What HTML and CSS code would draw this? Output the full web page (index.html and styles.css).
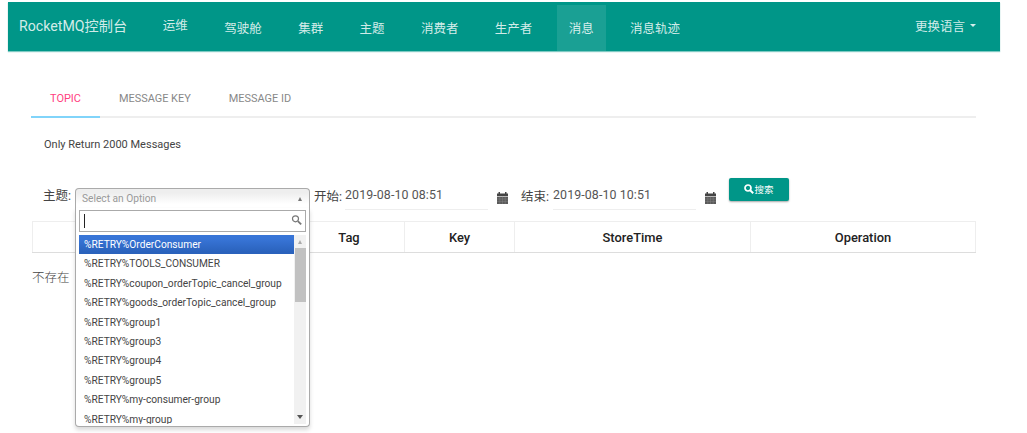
FILE: index.html
```
<!DOCTYPE html>
<html lang="zh">
<head>
    <meta charset="UTF-8">
    <meta name="viewport" content="width=device-width, initial-scale=1.0">
    <title>RocketMQ控制台</title>
    <link rel="stylesheet" href="styles.css">
</head>

<body>
    <!-- 顶部导航 -->
    <nav class="navbar">
        <a class="brand" href="#">RocketMQ控制台</a>
        <ul class="nav">
            <li class="ops"><a href="#">运维</a></li>
            <li><a href="#">驾驶舱</a></li>
            <li><a href="#">集群</a></li>
            <li><a href="#">主题</a></li>
            <li><a href="#">消费者</a></li>
            <li><a href="#">生产者</a></li>
            <li class="active"><a href="#">消息</a></li>
            <li><a href="#">消息轨迹</a></li>
        </ul>
        <a class="language" href="#">更换语言<span class="caret"></span></a>
    </nav>

    <div class="container">
        <!-- 查询方式 -->
        <div class="tabs">
            <a class="tab selected" href="#">Topic</a>
            <a class="tab" href="#">Message Key</a>
            <a class="tab" href="#">Message ID</a>
        </div>

        <h5 class="tip">Only Return 2000 Messages</h5>

        <!-- 查询条件 -->
        <form class="search-form">
            <label class="topic-label">主题:</label>
            <div class="chosen">
                <div class="chosen-single">
                    <span>Select an Option</span>
                    <i class="arrow-up"></i>
                </div>
                <div class="chosen-drop">
                    <div class="chosen-search">
                        <span class="cursor"></span>
                        <svg width="11" height="11" viewBox="0 0 11 11">
                            <circle cx="4.5" cy="3.8" r="3" fill="none" stroke="#777" stroke-width="1.2"/>
                            <path d="M6.8 6.1L10.2 9.4" stroke="#777" stroke-width="1.8"/>
                        </svg>
                    </div>
                    <div class="chosen-list">
                        <ul class="chosen-results">
                            <li class="highlighted">%RETRY%OrderConsumer</li>
                            <li>%RETRY%TOOLS_CONSUMER</li>
                            <li>%RETRY%coupon_orderTopic_cancel_group</li>
                            <li>%RETRY%goods_orderTopic_cancel_group</li>
                            <li>%RETRY%group1</li>
                            <li>%RETRY%group3</li>
                            <li>%RETRY%group4</li>
                            <li>%RETRY%group5</li>
                            <li>%RETRY%my-consumer-group</li>
                            <li>%RETRY%my-group</li>
                        </ul>
                        <div class="scrollbar">
                            <i class="arrow-up"></i>
                            <div class="thumb"></div>
                            <i class="arrow-down"></i>
                        </div>
                    </div>
                </div>
            </div>

            <label class="begin-label">开始:</label>
            <div class="date">2019-08-10 08:51</div>
            <svg class="calendar" width="11" height="12" viewBox="0 0 11 12">
                <path d="M0 1.5h1.5V0H3v1.5h5V0h1.5v1.5H11V4H0z" fill="#444"/>
                <path d="M0 4.6h11V12H0z" fill="#5a5a5a"/>
                <path d="M0 7h11M0 9.4h11M2.8 4.6V12M5.5 4.6V12M8.2 4.6V12" stroke="#8a8a8a" stroke-width=".4"/>
            </svg>

            <label class="end-label">结束:</label>
            <div class="date">2019-08-10 10:51</div>
            <svg class="calendar" width="11" height="12" viewBox="0 0 11 12">
                <path d="M0 1.5h1.5V0H3v1.5h5V0h1.5v1.5H11V4H0z" fill="#444"/>
                <path d="M0 4.6h11V12H0z" fill="#5a5a5a"/>
                <path d="M0 7h11M0 9.4h11M2.8 4.6V12M5.5 4.6V12M8.2 4.6V12" stroke="#8a8a8a" stroke-width=".4"/>
            </svg>

            <button class="search-btn" type="button">
                <svg width="10" height="10" viewBox="0 0 10 10">
                    <circle cx="4" cy="4" r="3" fill="none" stroke="#fff" stroke-width="1.7"/>
                    <path d="M6.2 6.2L9.2 9.2" stroke="#fff" stroke-width="2"/>
                </svg>搜索
            </button>
        </form>

        <!-- 查询结果 -->
        <table class="result">
            <thead>
                <tr>
                    <th class="col-id"></th>
                    <th class="col-tag">Tag</th>
                    <th class="col-key">Key</th>
                    <th class="col-time">StoreTime</th>
                    <th>Operation</th>
                </tr>
            </thead>
        </table>
        <div class="empty">不存在</div>
    </div>
</body>
</html>
```
FILE: styles.css
```
* {
    box-sizing: border-box;
}

body {
    margin: 0;
    height: 433px;
    overflow: hidden;
    background: #fff;
    color: #444;
    font-family: Roboto, "Noto Sans CJK SC", sans-serif;
    font-size: 12.5px;
}

a {
    color: inherit;
    text-decoration: none;
}

ul {
    list-style: none;
    margin: 0;
    padding: 0;
}

/* 导航栏 */
.navbar {
    display: flex;
    width: 992px;
    height: 49px;
    margin: 2px 0 0 8px;
    padding: 0 24px 0 11px;
    background: #009688;
    box-shadow: 0 1px 1px rgba(0, 150, 136, 0.5);
    color: rgba(255, 255, 255, 0.84);
}

.brand {
    width: 132px;
    line-height: 48px;
    font-size: 14.2px;
}

.nav {
    display: flex;
    gap: 12.7px;
    margin-top: 3px;
}

.nav li {
    height: 46px;
    padding: 0 11.85px;
    line-height: 48px;
}

.nav .ops {
    line-height: 42px;
}

.nav .active {
    background: rgba(255, 255, 255, 0.1);
}

.language {
    display: flex;
    align-items: center;
    height: 47px;
    margin-left: auto;
}

.caret {
    margin-left: 5px;
    border-top: 3px solid;
    border-left: 3px solid transparent;
    border-right: 3px solid transparent;
}

.container {
    width: 944px;
    margin-left: 32px;
}

/* 标签页 */
.tabs {
    display: flex;
    height: 43px;
    margin: 24px 0 0 -1px;
    border-bottom: 2px solid #eee;
}

.tab {
    height: 43px;
    padding: 0 19px;
    line-height: 48px;
    font-size: 10.95px;
    text-transform: uppercase;
    color: #888;
}

.tab.selected {
    color: #ff4081;
    border-bottom: 2px solid #81d4fa;
}

.tip {
    margin: 20px 0 0 12px;
    line-height: 14px;
    font-size: 11px;
    font-weight: normal;
}

/* 查询条件 */
.search-form {
    display: flex;
    align-items: flex-start;
    height: 69px;
    padding: 26px 0 0 11px;
}

.search-form label {
    flex: none;
    margin-top: 10px;
    line-height: 18px;
}

.search-form .topic-label {
    width: 32px;
    margin-top: 9px;
}

.begin-label {
    width: 31px;
    margin-left: 4px;
}

.end-label {
    width: 32px;
    margin-left: 13px;
}

.date {
    width: 143px;
    height: 32px;
    padding-top: 8px;
    line-height: 17px;
    font-size: 12.4px;
    letter-spacing: 0.1px;
    border-bottom: 1px solid #eee;
    color: #555;
}

.calendar {
    flex: none;
    margin: 14px 0 0 9px;
}

.search-btn {
    display: flex;
    justify-content: center;
    align-items: center;
    width: 60px;
    height: 23px;
    margin: 0 0 0 13px;
    padding: 0 0 2px;
    border: none;
    border-radius: 2px;
    background: #009688;
    box-shadow: 0 1px 2px rgba(0, 0, 0, 0.35);
    color: #fff;
    font-family: inherit;
    font-size: 9.5px;
    cursor: pointer;
}

/* 下拉框 */
.chosen {
    position: relative;
    flex: none;
    width: 235px;
    margin-top: 10px;
    font-size: 10.2px;
}

.chosen-single {
    display: flex;
    justify-content: space-between;
    align-items: center;
    height: 20px;
    padding: 0 7px 0 6px;
    border: 1px solid #aaa;
    border-bottom: none;
    border-radius: 4px 4px 0 0;
    background: linear-gradient(#eee 20%, #fff 80%);
    color: #999;
}

.arrow-up {
    border-bottom: 4px solid #777;
    border-left: 2.5px solid transparent;
    border-right: 2.5px solid transparent;
}

.arrow-down {
    border-top: 4px solid #555;
    border-left: 3px solid transparent;
    border-right: 3px solid transparent;
}

.chosen-drop {
    position: absolute;
    top: 20px;
    left: 0;
    z-index: 10;
    width: 235px;
    height: 219px;
    padding: 2px 3px;
    border: 1px solid #aaa;
    border-top: none;
    border-radius: 0 0 4px 4px;
    background: #fff;
    box-shadow: 0 3px 4px rgba(0, 0, 0, 0.15);
}

.chosen-search {
    display: flex;
    justify-content: space-between;
    align-items: center;
    height: 22px;
    padding: 0 3px 2px 4px;
    border: 1px solid #aaa;
}

.cursor {
    width: 1px;
    height: 14px;
    margin-top: 2px;
    background: #222;
}

.chosen-list {
    display: flex;
    height: 189px;
    margin-top: 3px;
    overflow: hidden;
}

.chosen-results {
    flex: 1;
}

.chosen-results li {
    height: 19.4px;
    padding-left: 5px;
    line-height: 19px;
    white-space: nowrap;
}

.chosen-results .highlighted {
    background: linear-gradient(#3875d7 20%, #2a62bc 90%);
    color: #fff;
}

.scrollbar {
    display: flex;
    flex-direction: column;
    align-items: center;
    width: 12px;
    padding: 5px 0 5px;
    background: #f1f1f1;
}

.scrollbar .arrow-up {
    border-bottom-color: #aaa;
}

.thumb {
    width: 11px;
    height: 54px;
    margin: 4px 0 auto;
    background: #c1c1c1;
}

/* 结果表格 */
.result {
    width: 944px;
    height: 32px;
    table-layout: fixed;
    border-collapse: collapse;
}

.result th {
    padding: 0;
    border: 1px solid #eee;
    border-bottom: 1px solid #ddd;
    font-size: 12.9px;
    font-weight: 500;
    color: #222;
}

.col-id {
    width: 261px;
}

.col-tag {
    width: 111px;
}

.col-key {
    width: 110px;
}

.col-time {
    width: 236px;
}

.empty {
    margin-top: 16px;
    line-height: 18px;
    font-weight: 300;
}
```
